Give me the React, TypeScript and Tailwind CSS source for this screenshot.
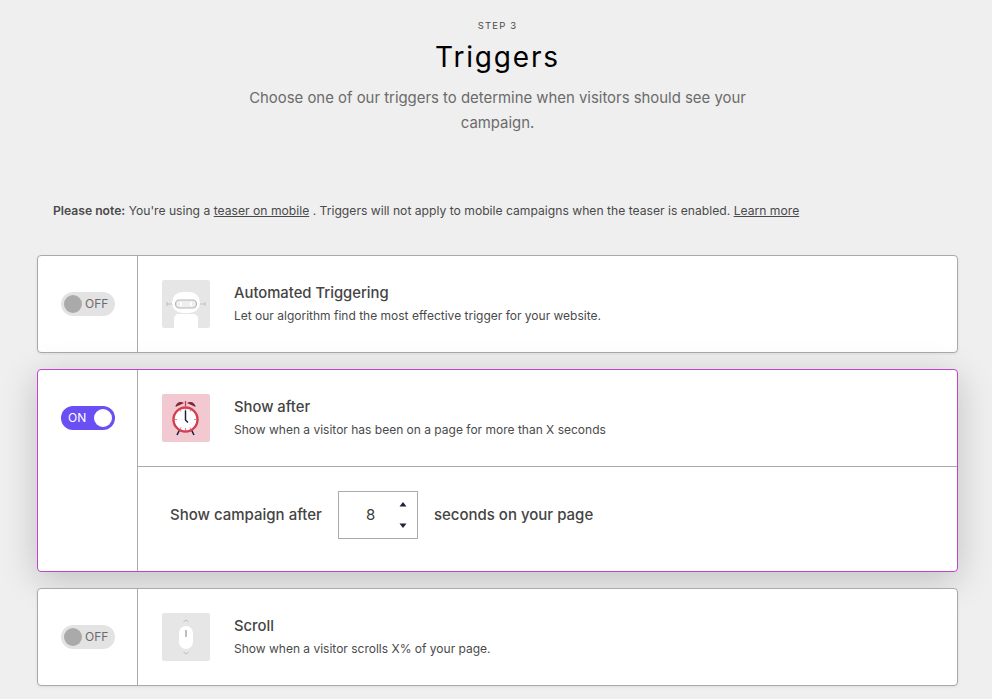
const font = "font-['Inter','Noto_Sans',sans-serif]";

function Toggle({ on }: { on: boolean }) {
  if (on) {
    return (
      <div className="flex h-6 w-[54px] items-center justify-between rounded-full bg-[#6a4ff5] pl-[7px] pr-[3px] text-[12px] text-white">
        <span>ON</span>
        <span className="h-[18px] w-[18px] rounded-full bg-white" />
      </div>
    );
  }
  return (
    <div className="flex h-6 w-[54px] items-center gap-[3px] rounded-full bg-[#e3e3e3] pl-[3px] text-[12px] text-[#6b6b6b]">
      <span className="h-[18px] w-[18px] rounded-full bg-[#aaaaaa]" />
      <span>OFF</span>
    </div>
  );
}

function RobotIcon() {
  return (
    <svg viewBox="0 0 48 48" className="h-12 w-12 rounded-[2px] bg-[#e6e6e6]">
      <path d="M4 24h6M5 22v4M38 24h6M43 22v4" stroke="#c4c4c4" strokeWidth="1" fill="none" />
      <rect x="10" y="12" width="28" height="21" rx="10.500" fill="#fff" />
      <rect x="13.500" y="20" width="21" height="8" rx="4" fill="#eeeeee" stroke="#b5b5b5" strokeWidth="1.200" />
      <rect x="18" y="22" width="2" height="4" fill="#fff" />
      <rect x="28" y="22" width="2" height="4" fill="#fff" />
      <path d="M12 48v-9c0-3 2-5 5-5h14c3 0 5 2 5 5v9z" fill="#fff" />
    </svg>
  );
}

function ClockIcon() {
  return (
    <svg viewBox="0 0 48 48" className="h-12 w-12 rounded-[2px] bg-[#f2c9d0]">
      <path d="M13.500 13c0-4 5-6.500 8.500-4z" fill="#7c2a3a" />
      <path d="M33.500 13c0-4-5-6.500-8.500-4z" fill="#7c2a3a" />
      <path d="M23.500 7v5" stroke="#c9384a" strokeWidth="1.200" />
      <path d="M17.500 36l-2.500 5M29.500 36l2.500 5" stroke="#1c2340" strokeWidth="1.600" />
      <circle cx="23.500" cy="25.500" r="12" fill="#fff" stroke="#d23f50" strokeWidth="2.400" />
      <path d="M23.500 15v2M23.500 34v2M13 25.500h2M32 25.500h2M18 16l1 1.700M29 16l-1 1.700M18 35l1-1.700M29 35l-1-1.700" stroke="#d98a95" strokeWidth="1" />
      <path d="M23.500 16.500v9.500l2.500 2.500" stroke="#1c2340" strokeWidth="1.500" fill="none" />
    </svg>
  );
}

function MouseIcon() {
  return (
    <svg viewBox="0 0 48 48" className="h-12 w-12 rounded-[2px] bg-[#e6e6e6]">
      <path d="M21.500 9l2.500-2 2.500 2M21.500 39l2.500 2 2.500-2" stroke="#bdbdbd" strokeWidth="1" fill="none" />
      <rect x="17" y="13" width="14" height="23" rx="7" fill="#fff" />
      <rect x="23" y="17" width="2" height="7" fill="#bdbdbd" />
    </svg>
  );
}

type CardProps = {
  on?: boolean;
  icon: React.ReactNode;
  title: string;
  text: string;
  children?: React.ReactNode;
};

function TriggerCard({ on = false, icon, title, text, children }: CardProps) {
  return (
    <div
      className={
        on
          ? "flex rounded-[4px] border border-[#c044cc] bg-white shadow-[0_8px_36px_rgba(0,0,0,0.2)]"
          : "flex rounded-[4px] border border-[#aaaaaa] bg-white shadow-[0_1px_3px_rgba(0,0,0,0.08)]"
      }
    >
      <div className={on ? "w-[100px] shrink-0 border-r border-[#aaaaaa] pl-[23px] pt-[36px]" : "flex w-[100px] shrink-0 items-center border-r border-[#aaaaaa] pl-[23px]"}>
        <Toggle on={on} />
      </div>
      <div className="flex-1">
        <div className="flex h-[96px] items-center pl-6">
          {icon}
          <div className="ml-6 pb-[2px]">
            <div className="text-[14.800px] font-medium leading-5 text-[#444444]">{title}</div>
            <div className="mt-[5px] text-[12px] leading-4 text-[#4a4a4a]">{text}</div>
          </div>
        </div>
        {children}
      </div>
    </div>
  );
}

export default function App() {
  return (
    <div className={`${font} h-[699px] overflow-hidden bg-[#efefef]`}>
      <div className="flex flex-col items-center pl-[3px] pt-[20px]">
        <div className="text-[9.500px] leading-3 tracking-[0.12em] text-[#4a4a4a]">STEP 3</div>
        <h1 className="mt-[7px] text-[28px] leading-9 tracking-[0.065em] text-black">Triggers</h1>
        <p className="mt-[11px] w-[510px] text-center text-[14.900px] leading-[25px] text-[#6b6b6b]">
          Choose one of our triggers to determine when visitors should see your campaign.
        </p>
      </div>
      <p className="ml-[53px] mt-[67px] text-[12.150px] leading-4 text-[#4a4a4a]">
        <b className="font-semibold">Please note:</b> You're using a <span className="underline">teaser on mobile</span> . Triggers will not apply to mobile campaigns when the teaser is enabled. <span className="underline">Learn more</span>
      </p>
      <div className="ml-[37px] mt-[36px] flex w-[921px] flex-col gap-4">
        <TriggerCard icon={<RobotIcon />} title="Automated Triggering" text="Let our algorithm find the most effective trigger for your website." />
        <TriggerCard on icon={<ClockIcon />} title="Show after" text="Show when a visitor has been on a page for more than X seconds">
          <div className="flex h-[105px] items-start gap-4 border-t border-[#aaaaaa] pl-8 pt-6">
            <span className="mt-[14px] text-[15px] font-medium leading-5 text-[#444444]">Show campaign after</span>
            <div className="relative flex h-12 w-20 items-center border border-[#aaaaaa] pl-[27px] text-[15px] text-[#3a3a3a]">
              8
              <svg viewBox="0 0 8 30" className="absolute right-[10px] top-[8px] h-[30px] w-2">
                <path d="M4 2l3.500 4.500H.5zM4 28l3.500-4.500H.5z" fill="#1c2340" />
              </svg>
            </div>
            <span className="mt-[14px] text-[15px] font-medium leading-5 text-[#444444]">seconds on your page</span>
          </div>
        </TriggerCard>
        <TriggerCard icon={<MouseIcon />} title="Scroll" text="Show when a visitor scrolls X% of your page." />
      </div>
    </div>
  );
}
